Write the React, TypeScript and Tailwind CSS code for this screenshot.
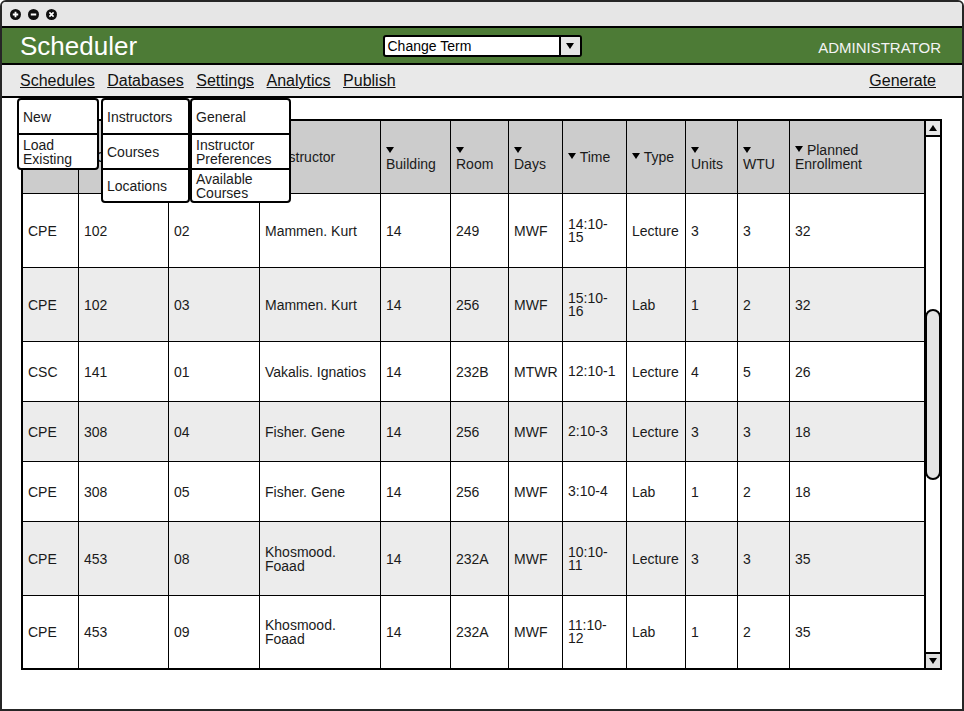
import React from 'react';

const Tri = ({ up = false, className = '' }: { up?: boolean; className?: string }) => (
  <svg width="8" height="6" viewBox="0 0 8 6" className={`inline-block ${className}`}>
    <path d={up ? 'M0 6H8L4 0Z' : 'M0 0H8L4 6Z'} fill="#000" />
  </svg>
);

const WinButton = ({ kind }: { kind: 'plus' | 'minus' | 'close' }) => (
  <svg width="11" height="11" viewBox="0 0 11 11">
    <circle cx="5.5" cy="5.5" r="5.5" fill="#111" />
    {kind !== 'close' && <path d="M2.8 5.5H8.2" stroke="#fff" strokeWidth="1.8" />}
    {kind === 'plus' && <path d="M5.5 2.8V8.2" stroke="#fff" strokeWidth="1.8" />}
    {kind === 'close' && <path d="M3.4 3.4L7.6 7.6M7.6 3.4L3.4 7.6" stroke="#fff" strokeWidth="1.6" />}
  </svg>
);

const cols =
  'grid grid-cols-[56px_90px_91px_121px_70px_58px_54px_64px_59px_52px_52px_134px]';

// first columns sit under the open menus, only a sliver of them shows
const headers: { stacked?: boolean; a: string; b?: string }[] = [
  { a: '' },
  { a: 'Course' },
  { a: '' },
  { a: 'Instructor' },
  { stacked: true, a: 'Building' },
  { stacked: true, a: 'Room' },
  { stacked: true, a: 'Days' },
  { a: 'Time' },
  { a: 'Type' },
  { stacked: true, a: 'Units' },
  { stacked: true, a: 'WTU' },
  { a: 'Planned', b: 'Enrollment' },
];

const rows: { h: string; bg: string; cells: string[] }[] = [
  { h: 'h-[74px] border-b', bg: 'bg-white', cells: ['CPE', '102', '02', 'Mammen. Kurt', '14', '249', 'MWF', '14:10-\n15', 'Lecture', '3', '3', '32'] },
  { h: 'h-[74px] border-b', bg: 'bg-[#ececec]', cells: ['CPE', '102', '03', 'Mammen. Kurt', '14', '256', 'MWF', '15:10-\n16', 'Lab', '1', '2', '32'] },
  { h: 'h-[60px] border-b', bg: 'bg-white', cells: ['CSC', '141', '01', 'Vakalis. Ignatios', '14', '232B', 'MTWR', '12:10-1', 'Lecture', '4', '5', '26'] },
  { h: 'h-[60px] border-b', bg: 'bg-[#ececec]', cells: ['CPE', '308', '04', 'Fisher. Gene', '14', '256', 'MWF', '2:10-3', 'Lecture', '3', '3', '18'] },
  { h: 'h-[60px] border-b', bg: 'bg-white', cells: ['CPE', '308', '05', 'Fisher. Gene', '14', '256', 'MWF', '3:10-4', 'Lab', '1', '2', '18'] },
  { h: 'h-[74px] border-b', bg: 'bg-[#ececec]', cells: ['CPE', '453', '08', 'Khosmood.\nFoaad', '14', '232A', 'MWF', '10:10-\n11', 'Lecture', '3', '3', '35'] },
  { h: 'h-[72px]', bg: 'bg-white', cells: ['CPE', '453', '09', 'Khosmood.\nFoaad', '14', '232A', 'MWF', '11:10-\n12', 'Lab', '1', '2', '35'] },
];

const Menu = ({ items, className }: { items: { label: string; h: string }[]; className: string }) => (
  <div className={`absolute top-0 z-10 flex flex-col rounded-[4px] border-2 border-black bg-white ${className}`}>
    {items.map((item, i) => (
      <div
        key={i}
        className={`flex items-center whitespace-pre pl-[4px] text-[14px] leading-[14px] text-[#1a1a1a] ${item.h} ${i > 0 ? 'border-t-2 border-black' : ''}`}
      >
        {item.label}
      </div>
    ))}
  </div>
);

const App: React.FC = () => {
  return (
    <div className="relative flex h-[711px] w-[964px] flex-col overflow-hidden rounded-t-[6px] border-2 border-[#262626] bg-white font-['Liberation_Sans',Arial,sans-serif]">
      {/* title bar */}
      <div className="flex h-[26px] shrink-0 items-center gap-[7px] border-b-2 border-black bg-[#e6e6e6] pl-[8px]">
        <WinButton kind="plus" />
        <WinButton kind="minus" />
        <WinButton kind="close" />
      </div>

      {/* header */}
      <div className="grid h-[37px] shrink-0 grid-cols-[1fr_auto_1fr] items-center border-b-2 border-black bg-[#4d7b36]">
        <div className="pl-[18px] text-[26px] leading-none text-white">Scheduler</div>
        <div className="flex h-[22px] w-[199px] overflow-hidden rounded-[3px] border-2 border-black bg-white">
          <div className="flex flex-1 items-center pl-[3px] text-[14px] leading-none text-black">Change Term</div>
          <div className="flex w-[21px] items-center justify-center border-l-2 border-black bg-[#e6e6e6]">
            <Tri />
          </div>
        </div>
        <div className="justify-self-end pr-[21px] pt-[4px] text-[15px] leading-none text-[#f4f4f4]">ADMINISTRATOR</div>
      </div>

      {/* nav */}
      <div className="flex h-[33px] shrink-0 items-center border-b-2 border-black bg-[#e9e9e9] pl-[18px] pr-[26px] text-[16px] text-[#111]">
        <div className="flex gap-[12.5px]">
          <span className="underline">Schedules</span>
          <span className="underline">Databases</span>
          <span className="underline">Settings</span>
          <span className="underline">Analytics</span>
          <span className="underline">Publish</span>
        </div>
        <span className="ml-auto underline">Generate</span>
      </div>

      {/* content */}
      <div className="relative flex-1">
        <Menu
          className="left-[15px] w-[82px]"
          items={[
            { label: 'New', h: 'h-[33px]' },
            { label: 'Load\nExisting', h: 'h-[35px]' },
          ]}
        />
        <Menu
          className="left-[99px] w-[89px]"
          items={[
            { label: 'Instructors', h: 'h-[33px]' },
            { label: 'Courses', h: 'h-[35px]' },
            { label: 'Locations', h: 'h-[33px]' },
          ]}
        />
        <Menu
          className="left-[188px] w-[101px]"
          items={[
            { label: 'General', h: 'h-[33px]' },
            { label: 'Instructor\nPreferences', h: 'h-[35px]' },
            { label: 'Available\nCourses', h: 'h-[33px]' },
          ]}
        />

        <div className="ml-[19px] mt-[21px] flex w-[921px] border-2 border-black text-[14px] leading-[14px] text-[#1a1a1a]">
          <div className="flex flex-col">
            <div className={`${cols} h-[73px] border-b border-black bg-[#cccccc]`}>
              {headers.map((hd, i) => (
                <div key={i} className={`flex items-center px-[5px] ${i < 11 ? 'border-r border-black' : ''}`}>
                  {hd.a === '' ? null : hd.stacked ? (
                    <div className="flex flex-col">
                      <div className="flex h-[14px] items-end pb-[4px]">
                        <Tri />
                      </div>
                      <div>{hd.a}</div>
                    </div>
                  ) : (
                    <div>
                      <div className="whitespace-nowrap">
                        <Tri className="align-[3px]" /> {hd.a}
                      </div>
                      {hd.b && <div>{hd.b}</div>}
                    </div>
                  )}
                </div>
              ))}
            </div>
            {rows.map((row, r) => (
              <div key={r} className={`${cols} ${row.h} ${row.bg} border-black`}>
                {row.cells.map((c, i) => (
                  <div
                    key={i}
                    className={`flex items-center whitespace-pre pl-[5px] ${i === 7 ? 'leading-[13px]' : 'leading-[14px]'} ${i < 11 ? 'border-r border-black' : ''}`}
                  >
                    {c}
                  </div>
                ))}
              </div>
            ))}
          </div>

          {/* scrollbar */}
          <div className="flex w-[16px] flex-col border-l-2 border-black bg-white">
            <div className="flex h-[16px] items-center justify-center border-b-2 border-black bg-[#e6e6e6]">
              <Tri up />
            </div>
            <div className="-ml-[1px] mt-[172px] h-[171px] w-[16px] rounded-full border-2 border-black bg-[#e4e4e4]" />
            <div className="mt-auto flex h-[16px] items-center justify-center border-t-2 border-black bg-[#e0e0e0]">
              <Tri />
            </div>
          </div>
        </div>
      </div>
    </div>
  );
};

export default App;
